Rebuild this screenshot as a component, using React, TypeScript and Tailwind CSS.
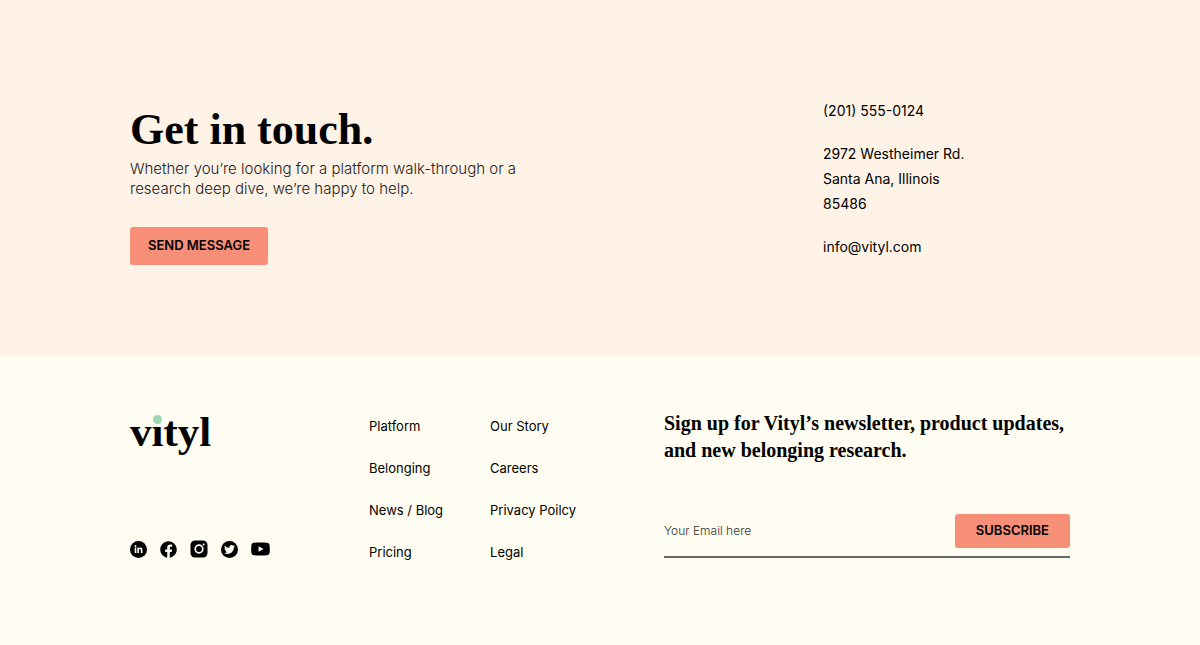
import { FaFacebook, FaLinkedinIn, FaTwitter } from "react-icons/fa";

const platformLinks = ["Platform", "Belonging", "News / Blog", "Pricing"];
const companyLinks = ["Our Story", "Careers", "Privacy Poilcy", "Legal"];

function InstagramIcon() {
  return (
    <svg viewBox="0 0 18 18" className="size-[18px]" aria-hidden="true">
      <rect x="0.5" y="0.5" width="17" height="17" rx="4.5" fill="#000" />
      <circle cx="9" cy="9" r="3.8" fill="none" stroke="#fffdf1" strokeWidth="1.7" />
      <circle cx="13.6" cy="4.4" r="1" fill="#fffdf1" />
    </svg>
  );
}

function YoutubeIcon() {
  return (
    <svg viewBox="0 0 19 14" className="h-[14px] w-[19px]" aria-hidden="true">
      <path
        d="M3 .8C5.2 .5 7.3 .5 9.5 .5s4.3 0 6.5 .3c1.5 .2 2.4 1 2.6 2.4 .3 2.5 .3 5.1 0 7.6 -.2 1.4 -1.1 2.2 -2.6 2.4 -4.3 .4 -8.7 .4 -13 0C1.5 13 .6 12.2 .4 10.8c-.3 -2.5 -.3 -5.1 0 -7.6C.6 1.8 1.5 1 3 .8Z"
        fill="#000"
      />
      <path d="M7.6 4.2v5.6l4.9 -2.8Z" fill="#fffdf1" />
    </svg>
  );
}

function LinkColumn({ label, links }: { label: string; links: string[] }) {
  return (
    <nav aria-label={label}>
      <ul className="flex flex-col gap-[22px] text-[13px] leading-5">
        {links.map((link) => (
          <li key={link} className="h-5 whitespace-nowrap">
            <a href="#">{link}</a>
          </li>
        ))}
      </ul>
    </nav>
  );
}

export default function App() {
  return (
    <div className="flex min-h-screen flex-col bg-[#fffdf1] font-['Inter',sans-serif] text-black">
      <section className="bg-[#fff2e6] px-8 pt-[98px] pb-[90px]">
        <div className="mx-auto flex max-w-[940px] flex-wrap justify-between gap-8">
          <div className="pt-2">
            <h1 className="font-['Liberation_Serif',serif] text-[44px] leading-[48px] font-bold">
              Get in touch.
            </h1>
            <p className="mt-[5px] max-w-[410px] text-[15px] leading-5 font-light text-[#222]">
              Whether you’re looking for a platform walk-through or a research deep dive, we’re happy
              to help.
            </p>
            <button
              type="button"
              className="mt-7 h-[38px] rounded-[3px] bg-[#f78f78] px-[18px] text-[13px] font-semibold"
            >
              SEND MESSAGE
            </button>
          </div>
          <address className="w-[247px] text-[14px] leading-[25px] not-italic">
            <a href="tel:+12015550124" className="block">
              (201) 555-0124
            </a>
            <p className="my-[18px]">
              2972 Westheimer Rd.
              <br />
              Santa Ana, Illinois
              <br />
              85486
            </p>
            <a href="mailto:info@vityl.com" className="block">
              info@vityl.com
            </a>
          </address>
        </div>
      </section>

      <footer className="px-8 pt-[55px] pb-16">
        <div className="mx-auto flex max-w-[940px] flex-wrap justify-between gap-y-8">
          <div className="flex w-[239px] flex-col justify-between">
            <a
              href="#"
              className="relative self-start font-['Liberation_Serif',serif] text-[43px] leading-[44px] font-bold"
            >
              vityl
              <span className="absolute top-[5px] left-[23px] size-[9px] rounded-full bg-[#9fd5b5]" />
            </a>
            <div className="mb-1 flex items-center gap-[13px]">
              <a
                href="#"
                aria-label="LinkedIn"
                className="flex size-[17px] items-center justify-center rounded-full bg-black text-[#fffdf1]"
              >
                <FaLinkedinIn className="size-[9px]" />
              </a>
              <a href="#" aria-label="Facebook">
                <FaFacebook className="size-[17px]" />
              </a>
              <a href="#" aria-label="Instagram">
                <InstagramIcon />
              </a>
              <a
                href="#"
                aria-label="Twitter"
                className="flex size-[17px] items-center justify-center rounded-full bg-black text-[#fffdf1]"
              >
                <FaTwitter className="size-[11px]" />
              </a>
              <a href="#" aria-label="YouTube">
                <YoutubeIcon />
              </a>
            </div>
          </div>
          <div className="flex w-[295px] gap-[47px] pt-[6px]">
            <LinkColumn label="Product" links={platformLinks} />
            <LinkColumn label="Company" links={companyLinks} />
          </div>
          <form className="w-[406px]" onSubmit={(event) => event.preventDefault()}>
            <h2 className="font-['Liberation_Serif',serif] text-[20px] leading-[27px] font-bold">
              Sign up for Vityl’s newsletter, product updates, and new belonging research.
            </h2>
            <div className="mt-[50px] flex items-center justify-between border-b-2 border-[#666] pb-2">
              <input
                type="email"
                aria-label="Email address"
                placeholder="Your Email here"
                className="min-w-0 flex-1 bg-transparent text-[12px] leading-5 font-light outline-none placeholder:text-[#333]"
              />
              <button
                type="submit"
                className="h-[34px] rounded-[3px] bg-[#f78f78] px-[21px] text-[13px] font-semibold"
              >
                SUBSCRIBE
              </button>
            </div>
          </form>
        </div>
      </footer>
    </div>
  );
}
